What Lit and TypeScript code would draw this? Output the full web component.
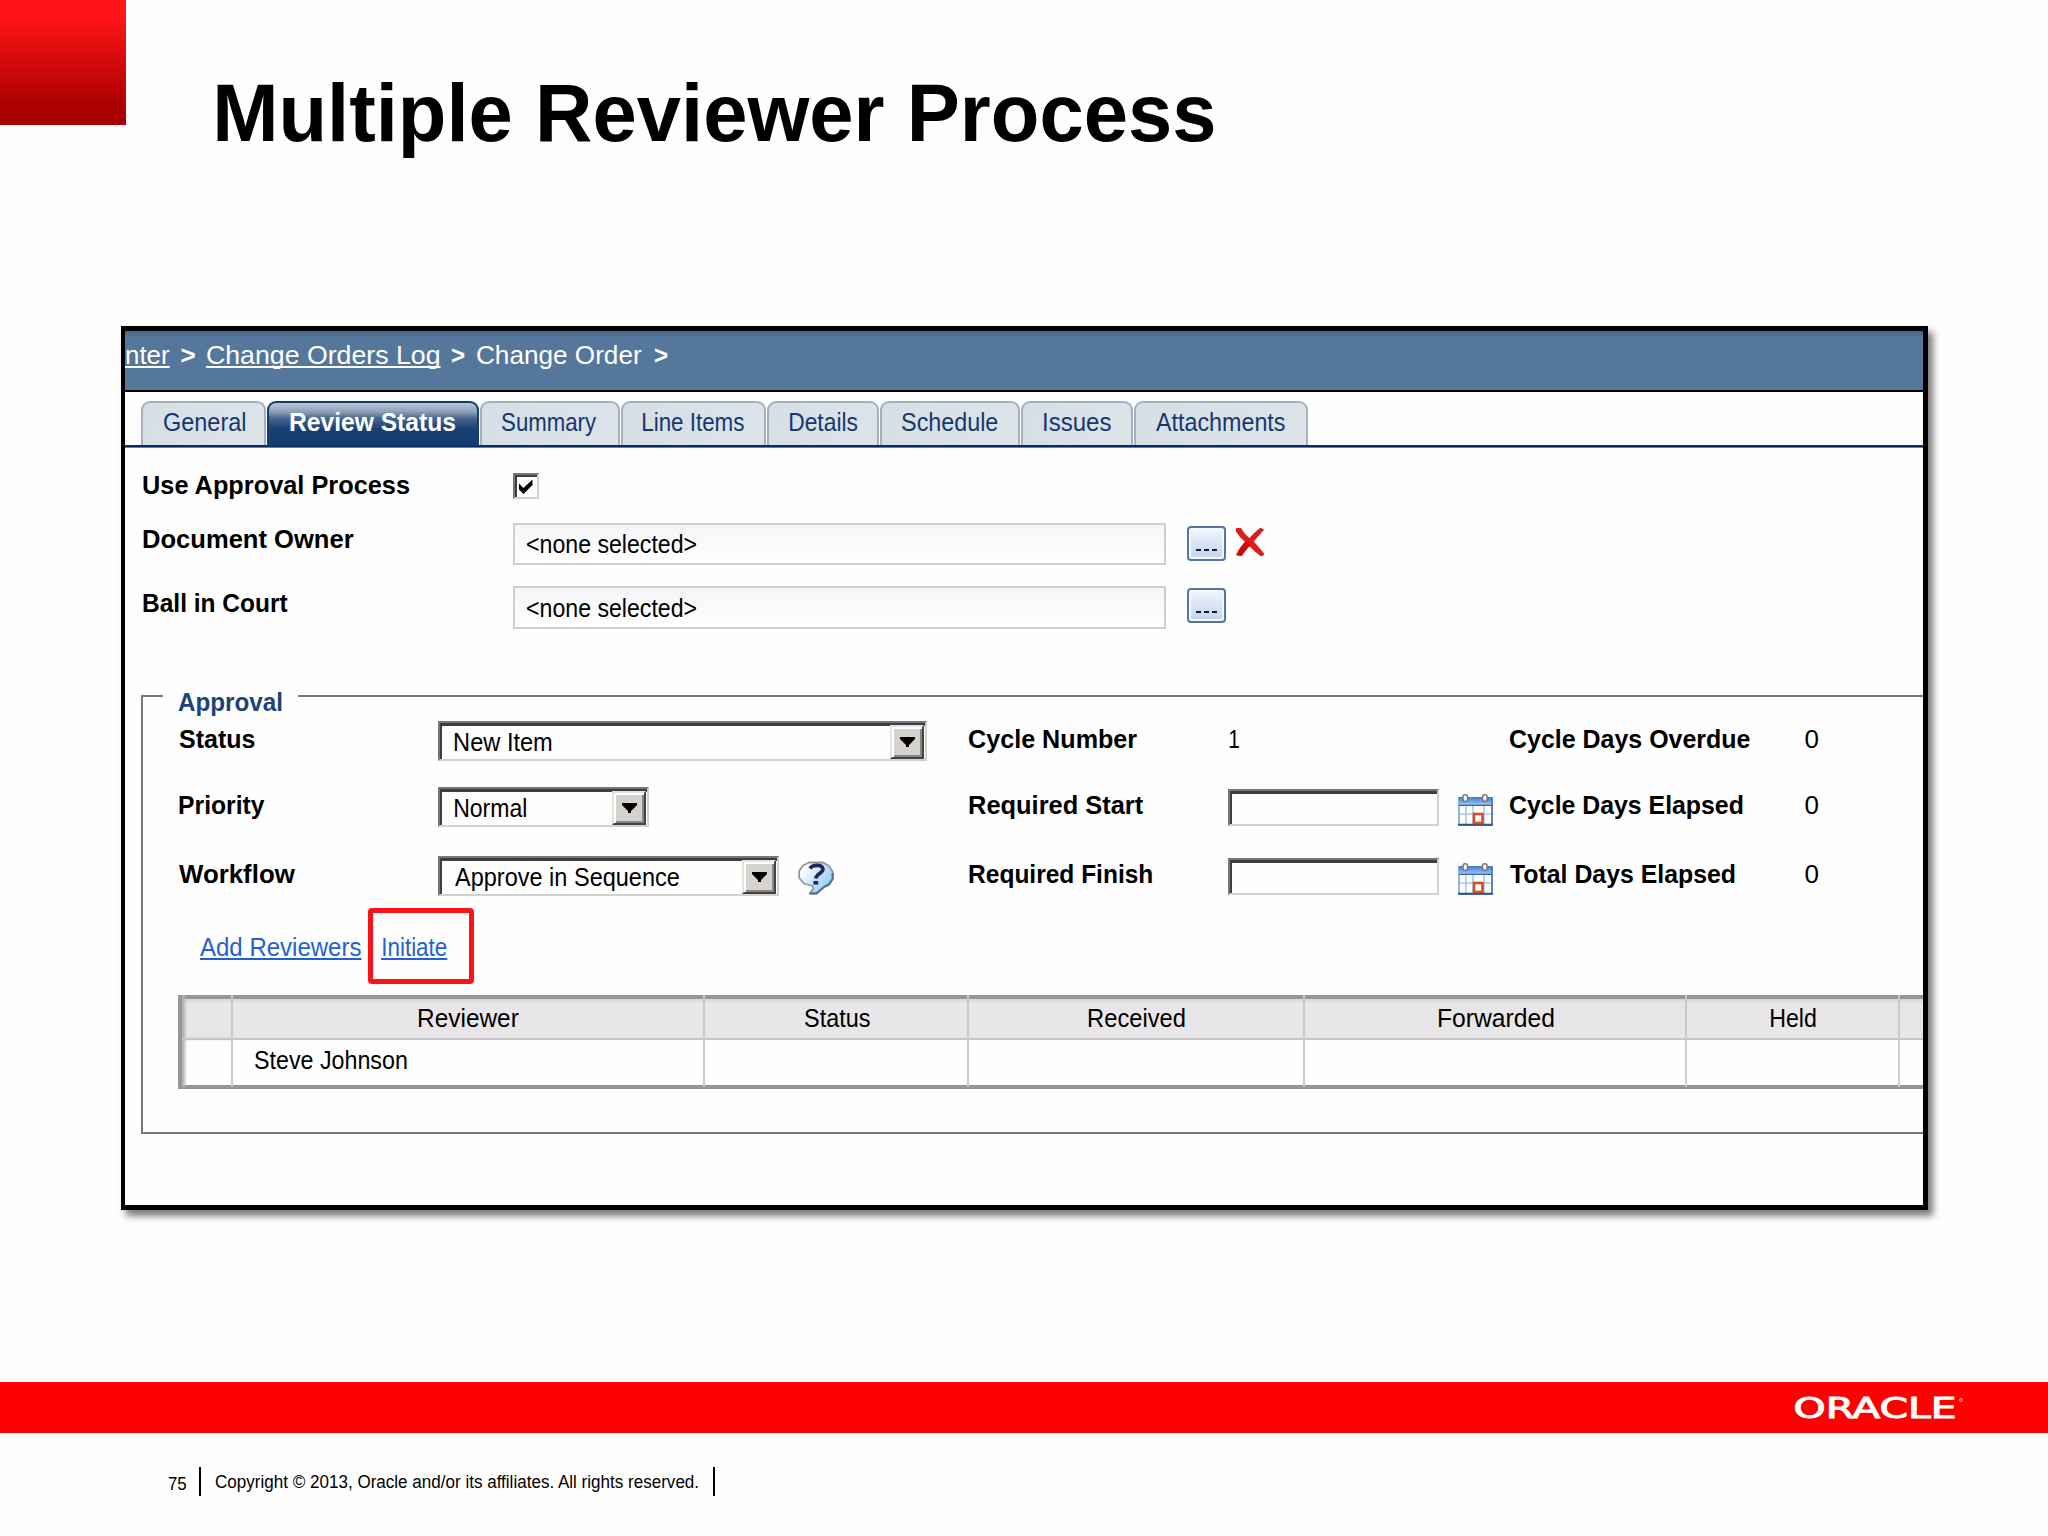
import { LitElement, html, css, svg, nothing } from "lit";
import { customElement, property } from "lit/decorators.js";

const ctx = document.createElement("canvas").getContext("2d")!;

/** One line of text whose inked width is scaled to exactly `w` pixels. */
@customElement("fit-text")
class FitText extends LitElement {
  @property() text = "";
  @property({ type: Number }) w = 10;
  @property({ type: Number }) size = 25;
  @property() weight = "400";
  @property() family = "Liberation Sans";
  @property({ type: Boolean }) underline = false;

  static styles = css`
    :host {
      display: block;
      flex: none;
      height: 30px;
    }
    .line {
      display: flex;
      height: 30px;
    }
    .ink {
      flex: none;
      white-space: pre;
      transform-origin: 0 0;
      font-kerning: none;
    }
    .underline {
      text-decoration: underline;
      text-decoration-thickness: 2px;
      text-underline-offset: 2px;
      text-decoration-skip-ink: none;
    }
  `;

  render() {
    ctx.font = `${this.weight} ${this.size}px "${this.family}", Arial, sans-serif`;
    (ctx as any).fontKerning = "none";
    const m = ctx.measureText(this.text);
    const k = this.w / (m.actualBoundingBoxLeft + m.actualBoundingBoxRight);
    const shift = m.actualBoundingBoxLeft * k;
    return html`<div class="line" style="width:${this.w}px"><span
        class="ink ${this.underline ? "underline" : ""}"
        style="font:${this.weight} ${this.size}px/30px '${this.family}',Arial,sans-serif;transform:translateX(${shift}px) scaleX(${k})"
        >${this.text}</span></div>`;
  }
}

const txt = (text: string, w: number, weight = "400", size = 25, underline = false, family = "Liberation Sans") =>
  html`<fit-text .text=${text} .w=${w} .weight=${weight} .size=${size} .underline=${underline} .family=${family}></fit-text>`;

interface Tab {
  label: string;
  w: number;
  tw: number;
  pad: number;
  gap: number;
  active?: boolean;
}

const TABS: Tab[] = [
  { label: "General", w: 125, tw: 81, pad: 20.5, gap: 0 },
  { label: "Review Status", w: 212, tw: 165, pad: 21, gap: 1, active: true },
  { label: "Summary", w: 140, tw: 94.5, pad: 19.5, gap: 1 },
  { label: "Line Items", w: 145, tw: 101, pad: 19.5, gap: 1 },
  { label: "Details", w: 112, tw: 67.5, pad: 20.5, gap: 1 },
  { label: "Schedule", w: 140, tw: 95.5, pad: 20, gap: 1 },
  { label: "Issues", w: 112, tw: 67, pad: 20.5, gap: 1 },
  { label: "Attachments", w: 174, tw: 129, pad: 20, gap: 1 },
];

const calendar = svg`<svg class="cal" width="35" height="32" viewBox="0 0 35 32">
  <defs><linearGradient id="cg" x1="0" y1="0" x2="0" y2="1"><stop offset="0" stop-color="#3d78cc"/><stop offset="1" stop-color="#9cc6f4"/></linearGradient></defs>
  <rect x="1" y="4" width="33" height="27" fill="#fff" stroke="#6e9bd2" stroke-width="1.5"/>
  <rect x="0.5" y="3" width="34" height="8" fill="url(#cg)"/>
  <path d="M1 11.3H34" stroke="#2f66b4" stroke-width="1.2"/>
  <path d="M8 12V30M15 12V30M26 12V30M2 20H33" stroke="#a9c9ec" stroke-width="1.6"/>
  <path d="M0 30.7H35" stroke="#27518f" stroke-width="2"/>
  <path d="M34 4V31" stroke="#456fa8" stroke-width="1.4"/>
  <rect x="16" y="20" width="8.5" height="9" fill="#fff" stroke="#dd4a1c" stroke-width="2.6"/>
  <rect x="5" y="0.8" width="4.6" height="6.6" rx="2.2" fill="#f4f4f4" stroke="#77787c" stroke-width="1.5"/>
  <rect x="24.5" y="0.8" width="4.6" height="6.6" rx="2.2" fill="#f4f4f4" stroke="#77787c" stroke-width="1.5"/>
</svg>`;

const cross = svg`<svg class="cross" width="28" height="28" viewBox="0 0 28 28">
  <path d="M1 0.5L4.5 0.5C7 5 10.500 8.500 13.500 11C17 7 20.500 3.500 24.500 0.500L27 2C23.500 6 19.500 10 16.800 13.500C20 17 23.500 21 27.500 26L25.500 28C21 24.500 17 21 13.500 17C10.500 20.500 7.500 24.500 5 28L1 26.500C3 22 6.500 17.500 9.800 13.800C6 10.500 2.500 6.500 0.500 3Z" fill="#e01b1b" stroke="#e01b1b" stroke-width="1.4"/>
  <path d="M13.500 17C10.500 20.500 7.500 24.500 5 28L1 26.500C3 22 6.500 17.500 9.800 13.800Z" fill="#c80c0c"/>
</svg>`;

const help = svg`<svg class="help" width="36" height="34" viewBox="0 0 36 34">
  <defs><linearGradient id="hg" x1="0" y1="0" x2="1" y2="0.7"><stop offset="0.2" stop-color="#fafdff"/><stop offset="1" stop-color="#8cc8f2"/></linearGradient></defs>
  <path d="M11 1.500H25L31 5L34.800 11V18L31 23.500L26 26L18.500 32.500H11.500L15.500 27.500L14.500 25L6 22.500L1.200 17V10L5 4.500Z" fill="url(#hg)" stroke="#8f979f" stroke-width="1.8" stroke-linejoin="round"/>
  <path d="M34.600 12V18L31 23.500L26 26L18.500 32.500H12" fill="none" stroke="#4d6f96" stroke-width="2"/>
  <path d="M12 7.500C14.500 3.500 24 3 25 8C25.500 12 18.500 12.500 17.800 17.500" fill="none" stroke="#23265e" stroke-width="3.600"/>
  <rect x="15.400" y="20" width="4.800" height="3.600" fill="#23265e"/>
</svg>`;

const select = (text: string, tw: number, w: number) => html`<div class="select" style="width:${w}px">
  ${txt(text, tw)}
  <div class="drop"><svg width="15" height="10" viewBox="0 0 15 10"><path d="M0 0H15V2L9 8V10H6V8L0 2Z" fill="#000" /></svg></div>
</div>`;

@customElement("app-root")
export class AppRoot extends LitElement {
  static styles = css`
    :host {
      display: block;
      width: 2048px;
      height: 1536px;
      background: #fefefe;
      color: #000;
      font-family: "Liberation Sans", Arial, sans-serif;
      overflow: hidden;
    }
    * { box-sizing: border-box; }
    .slide { display: flex; flex-direction: column; height: 1536px; }
    .top { display: flex; height: 326px; flex: none; }
    .mark {
      width: 126px;
      height: 125px;
      background: linear-gradient(#ff1518 0%, #ff1518 14%, #ab0000 84%, #a80000 100%);
    }
    .title { margin: 98px 0 0 91px; }
    .window {
      flex: none;
      margin-left: 121px;
      width: 1807px;
      height: 884px;
      border: solid #000;
      border-width: 5px 5px 5px 4px;
      background: #fefefe;
      box-shadow: 5px 6px 7px rgba(40, 30, 35, 0.6);
      overflow: hidden;
    }
    .crumbs {
      display: flex;
      height: 61px;
      padding: 9px 0 0 0.5px;
      border-bottom: 2px solid #000;
      background: linear-gradient(#45678b, #56779c 7px);
      color: #fff;
    }
    .sep1 { margin: 0 11px 0 12px; }
    .sep2 { margin: 0 12px 0 13px; }
    .sep3 { margin-left: 13px; }
    .tabs {
      display: flex;
      height: 56px;
      padding: 9px 0 0 16px;
      border-bottom: 1px solid #5a82b0;
      box-shadow: inset 0 -2px #0d2a5e;
    }
    .tab {
      flex: none;
      height: 44px;
      padding-top: 4px;
      border: 2px solid #a3b0c2;
      border-bottom: 0;
      border-radius: 9px 9px 0 0;
      background: linear-gradient(100deg, #d7dfe6, #dce4ea);
      color: #14386f;
    }
    .active {
      height: 45px;
      border-color: #123c74;
      background: linear-gradient(#bac6d4 0, #8ea2ba 20%, #44658f 36%, #173f73 62%, #123c70 100%);
      color: #fff;
    }
    .row { display: flex; }
    .a { height: 74px; }
    .b { height: 64px; }
    .c { height: 109px; }
    .name { width: 388px; padding: 2px 0 0 17.5px; flex: none; }
    .a .name { padding-top: 22px; }
    .check {
      width: 26px;
      height: 26px;
      margin-top: 25px;
      border: 2px solid;
      border-color: #77777a #d6d3cf #d6d3cf #77777a;
      box-shadow: inset 2px 2px #3f3f42;
    }
    .field {
      width: 653px;
      height: 42px;
      margin-top: 1px;
      padding: 4px 0 0 11.5px;
      border: 2px solid #cfcfd2;
      background: linear-gradient(#f5f5f7, #fdfdfe 75%);
    }
    .c .field { margin-top: 0; height: 43px; padding-top: 5px; }
    .more {
      display: flex;
      gap: 3px;
      align-items: flex-end;
      justify-content: center;
      width: 39px;
      height: 35px;
      margin: 4px 0 0 21px;
      padding-bottom: 8px;
      border: 2px solid #56759f;
      border-radius: 4px;
      background: linear-gradient(#f2f7fd, #bfd3ee);
      box-shadow: inset 0 0 0 2px #f3f8fe;
    }
    .c .more { margin-top: 2px; }
    .more i { width: 5px; height: 2px; background: #111b2c; }
    .cross { margin: 6px 0 0 10px; }
    .group {
      height: 439px;
      margin-left: 16px;
      border: solid #78787a;
      border-width: 0 0 2px 2px;
    }
    .legend { display: flex; height: 26px; }
    .stub { width: 20px; height: 2px; background: #78787a; }
    .rule { flex: 1; height: 2px; background: #78787a; }
    .caption { width: 135px; padding-left: 15px; margin-top: -8px; color: #1b427c; }
    .grid {
      display: grid;
      grid-template-columns: 260px 530px 260px 230px 51px 295.5px 60px;
      grid-template-rows: 66px 69px 52px;
      padding-left: 35px;
    }
    .lab { padding: 3px 0 0 1px; }
    .select {
      display: flex;
      justify-content: space-between;
      height: 40px;
      padding: 2px 1px 1px 15px;
      border: 2px solid;
      border-color: #77777b #d4d0cc #d4d0cc #77777b;
      box-shadow: inset 2px 3px #3e3e42;
    }
    .select fit-text { margin-top: 2px; }
    .drop {
      display: flex;
      align-items: center;
      justify-content: center;
      width: 34px;
      height: 34px;
      background: #d6d3ce;
      border: 2px solid;
      border-color: #e6e3de #424244 #424244 #e6e3de;
      box-shadow: inset 2px 2px #fff, inset -2px -2px #88868a;
    }
    .box {
      width: 211px;
      height: 37px;
      margin-top: 2px;
      border: 2px solid;
      border-color: #77777b #d4d0cc #d4d0cc #77777b;
      box-shadow: inset 2px 3px #3e3e42;
    }
    .cal { display: block; margin-top: 7px; }
    .with-help { display: flex; }
    .help { margin: 5px 0 0 18.5px; }
    .links { display: flex; height: 87px; padding-left: 56.5px; color: #2361d3; }
    .add { margin: 24px 7.500px 0 0; }
    .hot {
      width: 106px;
      height: 76px;
      padding: 19px 0 0 10px;
      border: 5px solid #fd1317;
      border-radius: 4px;
    }
    .table {
      display: grid;
      grid-template-columns: 49px 472px 264px 336px 382px 213px 1fr;
      grid-template-rows: 41px 45px;
      height: 94px;
      margin-left: 35px;
      border: solid #979598;
      border-width: 4px 0 4px 4px;
    }
    .th {
      display: flex;
      justify-content: center;
      padding: 4px 0 0 2px;
      margin-top: -4px;
      border-left: 2px solid #c9c9cb;
      border-bottom: 2px solid #c6c6c8;
      background: linear-gradient(#979598 4px, #d9d8d9 4px, #e8e6e8 9px);
    }
    .th fit-text { margin-top: 4px; }
    .td { border-left: 2px solid #cfcfd1; padding: 5px 0 0 22px; margin-bottom: -2px; }
    .edge { border-left: 0; box-shadow: inset 4px 0 3px -1px #b2b0b3; }
    .gap { flex: none; height: 172px; }
    .bar { flex: none; display: flex; height: 51px; padding: 12px 0 0 1795px; background: #f00; color: #fff; }
    .logo { -webkit-text-stroke: 1px #fff; }
    .reg { width: 4px; height: 4px; margin: 4px 0 0 2px; border: 1px solid #ffb0b0; border-radius: 50%; }
    .foot { display: flex; padding: 34px 0 0 168px; }
    .bl { width: 2px; height: 29px; background: #000; }
    .num { margin: 2px 12.5px 0 0; }
    .copy { margin: 0 13.5px 0 14.5px; }
  `;

  private th(label: string, w: number) {
    return html`<div class="th">${label ? txt(label, w) : nothing}</div>`;
  }

  private more() {
    return html`<div class="more"><i></i><i></i><i></i></div>`;
  }

  render() {
    return html`<div class="slide">
      <div class="top">
        <div class="mark"></div>
        <div class="title">${txt("Multiple Reviewer Process", 997, "700", 82)}</div>
      </div>
      <div class="window">
        <div class="crumbs">
          ${txt("nter", 44, "400", 26, true)}
          <div class="sep1">${txt(">", 14, "700", 26)}</div>
          ${txt("Change Orders Log", 232, "400", 26, true)}
          <div class="sep2">${txt(">", 13, "700", 26)}</div>
          ${txt("Change Order", 165, "400", 26)}
          <div class="sep3">${txt(">", 13, "700", 26)}</div>
        </div>
        <div class="tabs">
          ${TABS.map(
            (t) => html`<div
              class="tab ${t.active ? "active" : ""}"
              style="width:${t.w}px;padding-left:${t.pad}px;margin-left:${t.gap}px"
            >
              ${txt(t.label, t.tw, t.active ? "700" : "400")}
            </div>`
          )}
        </div>
        <div class="row a">
          <div class="name">${txt("Use Approval Process", 267.5, "700", 26)}</div>
          <div class="check">
            <svg width="22" height="22" viewBox="0 0 22 22"><path d="M4 8.500L8.500 13L17.500 4.500V10L8.500 19L4 14.500Z" fill="#000" /></svg>
          </div>
        </div>
        <div class="row b">
          <div class="name">${txt("Document Owner", 210.5, "700", 26)}</div>
          <div class="field">${txt("<none selected>", 169.5)}</div>
          ${this.more()} ${cross}
        </div>
        <div class="row c">
          <div class="name">${txt("Ball in Court", 145, "700", 26)}</div>
          <div class="field">${txt("<none selected>", 169.5)}</div>
          ${this.more()}
        </div>
        <div class="group">
          <div class="legend">
            <div class="stub"></div>
            <div class="caption">${txt("Approval", 104, "700", 25)}</div>
            <div class="rule"></div>
          </div>
          <div class="grid">
            <div class="lab">${txt("Status", 76, "700", 26)}</div>
            <div>${select("New Item", 97, 489)}</div>
            <div class="lab">${txt("Cycle Number", 168, "700", 26)}</div>
            <div class="lab">${txt("1", 10)}</div>
            <div></div>
            <div class="lab">${txt("Cycle Days Overdue", 240, "700", 26)}</div>
            <div class="lab">${txt("0", 13, "400", 26)}</div>

            <div class="lab">${txt("Priority", 86, "700", 26)}</div>
            <div>${select("Normal", 71, 211)}</div>
            <div class="lab">${txt("Required Start", 174.5, "700", 26)}</div>
            <div class="box"></div>
            <div>${calendar}</div>
            <div class="lab">${txt("Cycle Days Elapsed", 233, "700", 26)}</div>
            <div class="lab">${txt("0", 13, "400", 26)}</div>

            <div class="lab">${txt("Workflow", 117, "700", 26)}</div>
            <div class="with-help">${select("Approve in Sequence", 224, 341)} ${help}</div>
            <div class="lab">${txt("Required Finish", 183.5, "700", 26)}</div>
            <div class="box"></div>
            <div>${calendar}</div>
            <div class="lab">${txt("Total Days Elapsed", 227, "700", 26)}</div>
            <div class="lab">${txt("0", 13, "400", 26)}</div>
          </div>
          <div class="links">
            <div class="add">${txt("Add Reviewers", 161, "400", 25, true)}</div>
            <div class="hot">${txt("Initiate", 63.5, "400", 25, true)}</div>
          </div>
          <div class="table">
            <div class="th edge"></div>
            ${this.th("Reviewer", 99.5)} ${this.th("Status", 65)} ${this.th("Received", 96)}
            ${this.th("Forwarded", 115)} ${this.th("Held", 45)} ${this.th("", 0)}
            <div class="td edge"></div>
            <div class="td">${txt("Steve Johnson", 152)}</div>
            <div class="td"></div>
            <div class="td"></div>
            <div class="td"></div>
            <div class="td"></div>
            <div class="td"></div>
          </div>
        </div>
      </div>
      <div class="gap"></div>
      <div class="bar">
        <div class="logo">${txt("ORACLE", 161.5, "400", 28, false, "DejaVu Sans")}</div>
        <div class="reg"></div>
      </div>
      <div class="foot">
        <div class="num">${txt("75", 18, "400", 17.5)}</div>
        <div class="bl"></div>
        <div class="copy">${txt("Copyright © 2013, Oracle and/or its affiliates. All rights reserved.", 484.5, "400", 17.5)}</div>
        <div class="bl"></div>
      </div>
    </div>`;
  }
}
